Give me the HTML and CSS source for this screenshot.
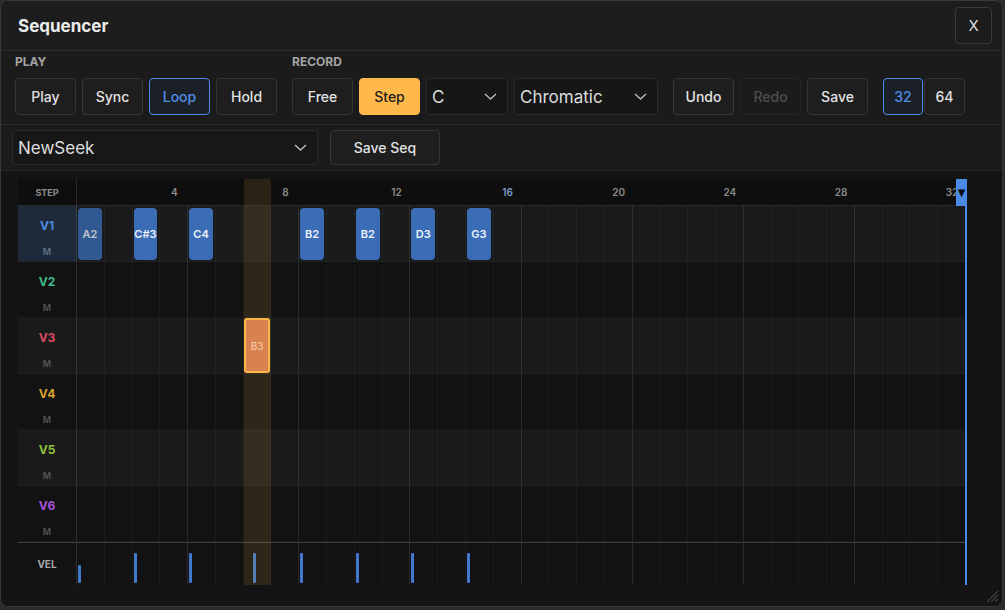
FILE: index.html
```html
<!DOCTYPE html>
<html lang="en">
<head>
    <meta charset="UTF-8">
    <meta name="viewport" content="width=device-width, initial-scale=1.0">
    <title>Sequencer</title>
    <link rel="stylesheet" href="styles.css">
</head>
<body>
    <div class="window">
        <div class="titlebar">
            <h1>Sequencer</h1>
            <button class="close-button">X</button>
        </div>

        <div class="toolbar">
            <div class="group">
                <div class="group-label">PLAY</div>
                <div class="group-buttons">
                    <button class="btn">Play</button>
                    <button class="btn">Sync</button>
                    <button class="btn active">Loop</button>
                    <button class="btn">Hold</button>
                </div>
            </div>
            <div class="group">
                <div class="group-label">RECORD</div>
                <div class="group-buttons">
                    <button class="btn">Free</button>
                    <button class="btn on">Step</button>
                    <div class="select key-select">
                        <span>C</span>
                        <svg width="13" height="7" viewBox="0 0 13 7"><path d="M1 1l5.5 5 5.5-5" fill="none" stroke="#bcbcbc" stroke-width="1.4"/></svg>
                    </div>
                    <div class="select scale-select">
                        <span>Chromatic</span>
                        <svg width="13" height="7" viewBox="0 0 13 7"><path d="M1 1l5.5 5 5.5-5" fill="none" stroke="#bcbcbc" stroke-width="1.4"/></svg>
                    </div>
                </div>
            </div>
            <div class="group-buttons">
                <button class="btn">Undo</button>
                <button class="btn disabled">Redo</button>
                <button class="btn">Save</button>
            </div>
            <div class="segmented">
                <button class="btn seg active">32</button>
                <button class="btn seg">64</button>
            </div>
        </div>

        <div class="seq-bar">
            <div class="select seq-select">
                <span>NewSeek</span>
                <svg width="13" height="7" viewBox="0 0 13 7"><path d="M1 1l5.5 5 5.5-5" fill="none" stroke="#bcbcbc" stroke-width="1.4"/></svg>
            </div>
            <button class="btn save-seq">Save Seq</button>
        </div>

        <div class="grid-area">
            <div class="grid" id="grid">
                <!-- loop end marker -->
                <div class="loop-line"></div>
                <div class="loop-marker">▼</div>
            </div>
        </div>

        <svg class="resize-handle" width="14" height="14" viewBox="0 0 14 14">
            <path d="M13 2L2 13M13 6L6 13M13 10L10 13" stroke="#3e3e3e" stroke-width="1.2"/>
        </svg>
    </div>

    <script src="script.js"></script>
</body>
</html>
```

FILE: styles.css
```css
body {
    margin: 0;
    background-color: #2c2c2c;
    font-family: Inter, "Noto Sans", sans-serif;
}

.window {
    position: relative;
    width: 1003px;
    height: 607px;
    box-sizing: border-box;
    border: 1px solid #383838;
    border-radius: 8px;
    background-color: #1b1b1b;
    overflow: hidden;
    display: flex;
    flex-direction: column;
}

.titlebar {
    height: 49px;
    flex-shrink: 0;
    display: flex;
    align-items: center;
    justify-content: space-between;
    padding: 0 10px 0 17px;
    border-bottom: 1px solid #2f2f2f;
    background-color: #1d1d1d;
}

.titlebar h1 {
    margin: 0;
    font-size: 17px;
    font-weight: 700;
    color: #ececec;
}

.close-button {
    width: 37px;
    height: 37px;
    background-color: #1c1c1c;
    border: 1px solid #3a3a3a;
    border-radius: 4px;
    color: #dcdcdc;
    font: inherit;
    font-size: 15px;
}

.toolbar {
    flex-shrink: 0;
    display: flex;
    align-items: flex-end;
    gap: 15px;
    padding: 4px 14px 9px;
    border-bottom: 1px solid #2a2a2a;
}

.group-label {
    height: 14px;
    line-height: 14px;
    margin-bottom: 9px;
    font-size: 12px;
    font-weight: 700;
    color: #a3a3a3;
}

.group-buttons {
    display: flex;
    gap: 6px;
}

.btn {
    width: 61px;
    height: 37px;
    box-sizing: border-box;
    background-color: #1e1e1e;
    border: 1px solid #353535;
    border-radius: 4px;
    color: #e2e2e2;
    font: inherit;
    font-size: 14px;
    font-weight: 500;
    padding: 0;
}

.btn.active {
    border-color: #4b8be8;
    color: #4f8fe6;
    background-color: #1b1f26;
}

.btn.on {
    background-color: #ffb84a;
    border-color: #ffb84a;
    color: #1e1e1e;
}

.btn.disabled {
    background-color: #1b1b1b;
    border-color: #262626;
    color: #4e4e4e;
}

.segmented {
    display: flex;
    gap: 1px;
}

.btn.seg {
    width: 40px;
}

.btn.seg + .btn.seg {
    width: 41px;
}

.select {
    height: 37px;
    box-sizing: border-box;
    display: flex;
    align-items: center;
    justify-content: space-between;
    padding: 0 10px 0 5px;
    background-color: #161616;
    border: 1px solid #2b2b2b;
    border-radius: 4px;
    color: #dedede;
    font-size: 17px;
}

.key-select {
    width: 82px;
}

.scale-select {
    width: 144px;
}

.seq-bar {
    flex-shrink: 0;
    display: flex;
    gap: 12px;
    padding: 5px 11px;
    border-bottom: 1px solid #242424;
}

.seq-select {
    width: 306px;
    height: 35px;
    padding-left: 5px;
    background-color: #171717;
}

.btn.save-seq {
    width: 110px;
    height: 35px;
}

.grid-area {
    flex: 1;
    background-color: #141414;
    padding: 8px 0 0 17px;
}

.grid {
    position: relative;
    width: 948px;
}

.row {
    display: grid;
    grid-template-columns: 59px repeat(32, 1fr);
    height: 56px;
    box-sizing: border-box;
    border-bottom: 1px solid rgba(255, 255, 255, 0.045);
}

.row.odd {
    background-color: #1a1a1a;
}

.row.even {
    background-color: #121212;
}

.row-label {
    display: flex;
    flex-direction: column;
    align-items: center;
    justify-content: center;
    border-right: 1px solid rgba(255, 255, 255, 0.12);
    font-size: 10px;
    font-weight: 700;
    color: #a8a8a8;
}

.row.head {
    height: 27px;
    background-color: #0e0e0e;
    border-bottom: 1px solid #292929;
}

.row.head .row-label {
    font-size: 9px;
    color: #8c8c8c;
}

.step-num {
    display: flex;
    align-items: center;
    justify-content: center;
    font-size: 10px;
    font-weight: 600;
    color: #8c8c8c;
}

.step-num.loop-end {
    color: #7e9cc9;
}

.row.voice .row-label {
    justify-content: space-between;
    padding: 12px 0 4px;
    box-sizing: border-box;
}

.row.selected .row-label {
    background-color: #1e2a3a;
}

.voice-name {
    font-size: 12px;
    font-weight: 700;
}

.mute {
    font-size: 9px;
    font-weight: 700;
    color: #4f4f4f;
}

.row.selected .mute {
    color: #5b6b80;
}

.v1 { color: #4d8ce0; }
.v2 { color: #3dbd8c; }
.v3 { color: #d9495e; }
.v4 { color: #d9a12a; }
.v5 { color: #8ec13a; }
.v6 { color: #a552dc; }

.cell {
    display: flex;
    min-width: 0;
    border-right: 1px solid rgba(255, 255, 255, 0.035);
}

.cell.beat {
    border-right-color: rgba(255, 255, 255, 0.1);
}

.note {
    position: relative;
    z-index: 2;
    flex: 1;
    margin: 2px 2px 1px 1px;
    display: flex;
    align-items: center;
    justify-content: center;
    background-color: #3a6db5;
    border-radius: 4px;
    color: #eef3fb;
    font-size: 11px;
    font-weight: 600;
}

.note.selected {
    margin: 0;
    background-color: #d7824f;
    border: 2px solid #ffb547;
    border-radius: 3px;
    color: #f7c7a0;
    font-size: 10px;
    font-weight: 500;
}

.row.vel {
    height: 43px;
    background-color: #121212;
    border-top: 1px solid #3f3f3f;
    border-bottom: none;
}

.row.vel .cell {
    align-items: flex-end;
    padding-bottom: 2px;
}

.vel-bar {
    width: 3px;
    background-color: #3f78cc;
    border-radius: 1px;
}

.step-highlight {
    position: absolute;
    z-index: 1;
    top: 0;
    bottom: 0;
    left: calc(59px + (var(--step) - 1) * (100% - 59px) / 32);
    width: calc((100% - 59px) / 32);
    background-color: rgba(207, 160, 67, 0.15);
    border-radius: 2px 2px 0 0;
    pointer-events: none;
}

.loop-line {
    position: absolute;
    z-index: 3;
    top: 0;
    bottom: 0;
    right: -1px;
    width: 2px;
    background-color: #4a8ae6;
}

.loop-marker {
    position: absolute;
    z-index: 3;
    top: 0;
    right: -1px;
    width: 11px;
    height: 27px;
    line-height: 27px;
    text-align: center;
    background-color: #4a8ae6;
    color: #0c0c0c;
    font-family: "DejaVu Sans", sans-serif;
    font-size: 10px;
}

.resize-handle {
    position: absolute;
    right: 3px;
    bottom: 3px;
}
```

FILE: script.js
```js
const STEPS = 32;
const LOOP_END = 16;
const CURRENT_STEP = 7;

// notes per voice: step -> [note, velocity]
const voices = [
    { name: 'V1', notes: { 1: ['A2', 60], 3: ['C#3', 100], 5: ['C4', 100], 9: ['B2', 100], 11: ['B2', 100], 13: ['D3', 100], 15: ['G3', 100] } },
    { name: 'V2', notes: {} },
    { name: 'V3', notes: { 7: ['B3', 100] } },
    { name: 'V4', notes: {} },
    { name: 'V5', notes: {} },
    { name: 'V6', notes: {} }
];

const selectedVoice = 0;
const selectedCell = { voice: 2, step: 7 };

const grid = document.getElementById('grid');

function makeRow(className, labelHtml) {
    const row = document.createElement('div');
    row.className = 'row ' + className;
    const label = document.createElement('div');
    label.className = 'row-label';
    label.innerHTML = labelHtml;
    row.appendChild(label);
    grid.appendChild(row);
    return row;
}

function makeCell(row, step) {
    const cell = document.createElement('div');
    cell.className = 'cell' + (step % 4 === 0 ? ' beat' : '');
    row.appendChild(cell);
    return cell;
}

// step numbers
const head = makeRow('head', 'STEP');
for (let s = 1; s <= STEPS; s++) {
    const num = document.createElement('div');
    num.className = 'step-num' + (s === LOOP_END ? ' loop-end' : '');
    if (s % 4 === 0) num.textContent = s;
    head.appendChild(num);
}

// voice rows
voices.forEach((voice, i) => {
    let cls = 'voice ' + (i % 2 === 0 ? 'odd' : 'even');
    if (i === selectedVoice) cls += ' selected';
    const row = makeRow(cls, `<span class="voice-name v${i + 1}">${voice.name}</span><span class="mute">M</span>`);

    for (let s = 1; s <= STEPS; s++) {
        const cell = makeCell(row, s);
        const n = voice.notes[s];
        if (!n) continue;
        const note = document.createElement('div');
        const isSel = selectedCell.voice === i && selectedCell.step === s;
        note.className = 'note' + (isSel ? ' selected' : '');
        note.textContent = n[0];
        if (!isSel) note.style.opacity = 0.45 + 0.55 * n[1] / 100;
        cell.appendChild(note);
    }
});

// velocity lane
const vel = makeRow('vel', 'VEL');
for (let s = 1; s <= STEPS; s++) {
    const cell = makeCell(vel, s);
    voices.forEach((voice, i) => {
        const n = voice.notes[s];
        if (!n) return;
        const bar = document.createElement('div');
        bar.className = 'vel-bar';
        bar.style.height = Math.round(n[1] * 0.3) + 'px';
        bar.style.marginLeft = (1 + i * 4) + 'px';
        cell.appendChild(bar);
    });
}

// current step column
const hl = document.createElement('div');
hl.className = 'step-highlight';
hl.style.setProperty('--step', CURRENT_STEP);
grid.appendChild(hl);
```
